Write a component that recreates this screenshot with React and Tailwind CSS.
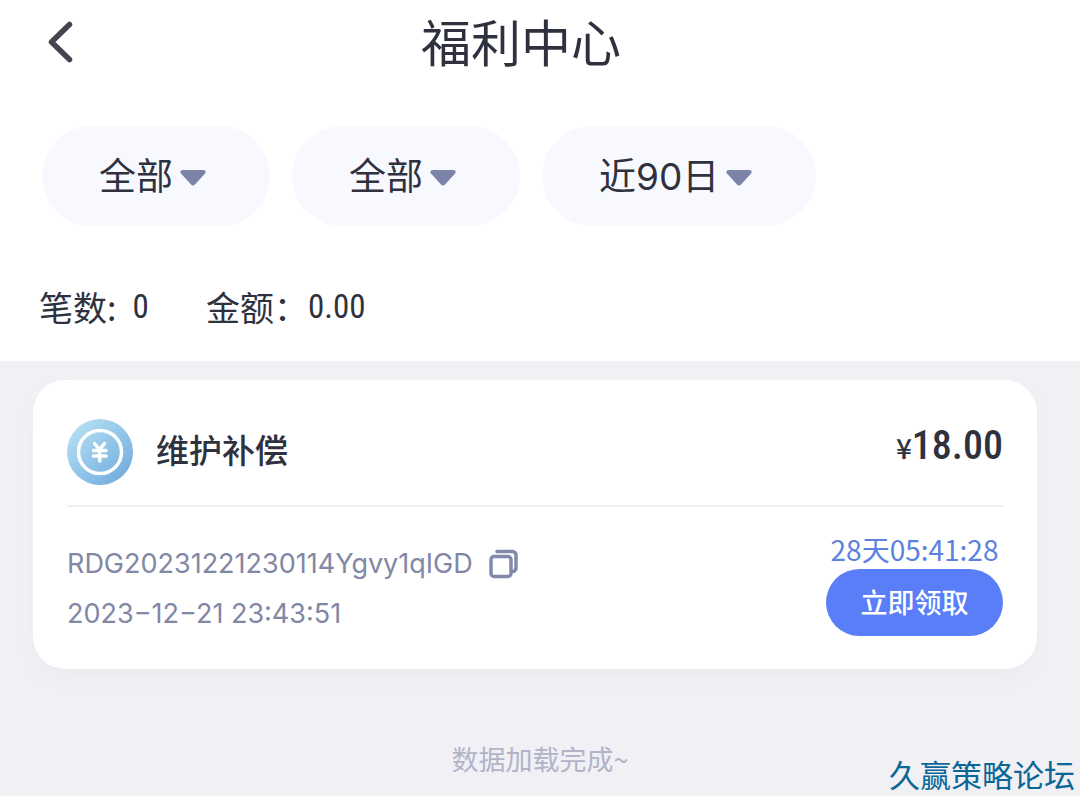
import React, { useState } from 'react';

const filterOptions = [
  { id: 'type', label: '类型', options: ['全部', '存款', '补偿'] },
  { id: 'status', label: '状态', options: ['全部', '待领取', '已领取'] },
  { id: 'range', label: '时间', options: ['近90日', '近30日', '近7日'] },
];

const FilterSelect = ({ id, label, options }) => {
  const [value, setValue] = useState(options[0]);

  return (
    <div className="relative">
      <select
        id={id}
        aria-label={label}
        value={value}
        onChange={(e) => setValue(e.target.value)}
        className="block h-[100px] appearance-none field-sizing-content rounded-full bg-[#f8f9fe] pl-[57px] pr-[97px] pt-0.5 font-['Inter','Noto_Sans_CJK_SC',sans-serif] text-[37px] text-[#2f323e]"
      >
        {options.map((option) => (
          <option key={option}>{option}</option>
        ))}
      </select>
      <svg className="pointer-events-none absolute right-[64px] top-[43px]" width="26" height="18" viewBox="0 0 26 18" aria-hidden="true">
        <path d="M3 1h20c2.600 0 3.400 2.200 1.800 3.800L15 15.500c-1.200 1.300-2.800 1.300-4 0L1.200 4.800C-.4 3.200.4 1 3 1Z" fill="#7b83a8" />
      </svg>
    </div>
  );
};

const CoinIcon = () => (
  <svg className="size-[66px] shrink-0" viewBox="0 0 66 66" aria-hidden="true">
    <defs>
      <linearGradient id="coin" x1="0.1" y1="0.1" x2="0.85" y2="0.9">
        <stop offset="0" stopColor="#b5dff3" />
        <stop offset="1" stopColor="#74aee0" />
      </linearGradient>
    </defs>
    <circle cx="33" cy="33" r="33" fill="url(#coin)" />
    <circle cx="33" cy="33" r="21.500" fill="none" stroke="#fff" strokeWidth="3.500" />
    <path d="M27.500 24.500l5 6 5-6M26.500 31.500h12.500M26.500 37h12.500M32.700 31v11" fill="none" stroke="#fff" strokeWidth="3.500" strokeLinecap="round" strokeLinejoin="round" />
  </svg>
);

const CopyIcon = () => (
  <svg className="size-[30px]" viewBox="0 0 30 30" fill="none" stroke="#8289ab" strokeWidth="3.500" aria-hidden="true">
    <rect x="2" y="7.500" width="20" height="20" rx="3" />
    <path d="M8 2.500h15.500a3.500 3.500 0 0 1 3.500 3.500v13c0 2-1.500 3.500-3.500 3.500" strokeLinecap="round" />
  </svg>
);

const BonusCard = ({ title, amount, orderNo, time, countdown }) => {
  return (
    <section className="ml-[33px] mr-[43px] mt-[19px] rounded-[32px] bg-white px-[34px] pb-[30px] shadow-lg shadow-gray-200/30">
      <div className="flex h-[127px] items-center border-b-2 border-[#f0f0f3] pt-[18px]">
        <CoinIcon />
        <h2 className="mb-1 ml-[23px] text-[33px] font-medium">{title}</h2>
        <p className="mb-3 ml-auto font-['Roboto_Condensed','Roboto',sans-serif] text-[40px] font-medium">
          <span className="font-['Noto_Sans_CJK_SC',sans-serif] text-[28px]">¥</span>
          {amount}
        </p>
      </div>
      <div className="flex items-end justify-between pt-[26px]">
        <div className="font-['Inter','Noto_Sans_CJK_SC',sans-serif] text-[27px] leading-[50px] text-[#8187a5]">
          <div className="flex items-center gap-4">
            <span>{orderNo}</span>
            <button type="button" aria-label="复制">
              <CopyIcon />
            </button>
          </div>
          <p>{time}</p>
        </div>
        <div className="flex flex-col items-center pb-[3px]">
          <p className="pb-1 text-[28px] leading-[32px] text-[#5b82dc]">{countdown}</p>
          <button type="button" className="h-[67px] w-[177px] rounded-full bg-[#597ef7] text-[27px] font-medium text-white">
            立即领取
          </button>
        </div>
      </div>
    </section>
  );
};

const App = () => {
  return (
    <div className="relative min-h-screen bg-[#f0f0f5] font-['Noto_Sans_CJK_SC',sans-serif] text-[#2f323e]">
      <div className="bg-white pb-[27px]">
        <header className="flex h-[84px] items-center pl-[47px] pr-[111px]">
          <button type="button" aria-label="返回">
            <svg width="26" height="42" viewBox="0 0 26 42" fill="none" stroke="#434651" strokeWidth="5.500" strokeLinecap="round" strokeLinejoin="round" aria-hidden="true">
              <path d="M22.500 3.500L4.500 21 22.500 38.500" />
            </svg>
          </button>
          <h1 className="flex-1 pb-1 text-center text-[50px] leading-[76px]">福利中心</h1>
        </header>
        <div className="mt-[42px] flex gap-[22px] pl-[42px]">
          {filterOptions.map((filter) => (
            <FilterSelect key={filter.id} {...filter} />
          ))}
        </div>
        <div className="mt-[54px] flex items-center pl-[39px] text-[34px] leading-[54px]">
          <p className="flex w-[167px] items-center">
            笔数:
            <span className="ml-4 font-['Roboto_Condensed','Roboto',sans-serif] text-[33px]">0</span>
          </p>
          <p className="flex items-center">
            金额：
            <span className="font-['Roboto_Condensed','Roboto',sans-serif] text-[33px]">0.00</span>
          </p>
        </div>
      </div>

      <BonusCard
        title="维护补偿"
        amount="18.00"
        orderNo="RDG20231221230114Ygvy1qIGD"
        time="2023−12−21 23:43:51"
        countdown="28天05:41:28"
      />
      <p className="mt-[70px] text-center text-[27px] leading-[40px] text-[#b1b4c8]">数据加载完成~</p>

      <div className="absolute bottom-0 right-[5px] pb-0.5 font-['KaiTi','Noto_Sans_CJK_SC',serif] text-[31px] leading-[40px] text-[#0b6797]">
        久赢策略论坛
      </div>
    </div>
  );
};

export default App;
